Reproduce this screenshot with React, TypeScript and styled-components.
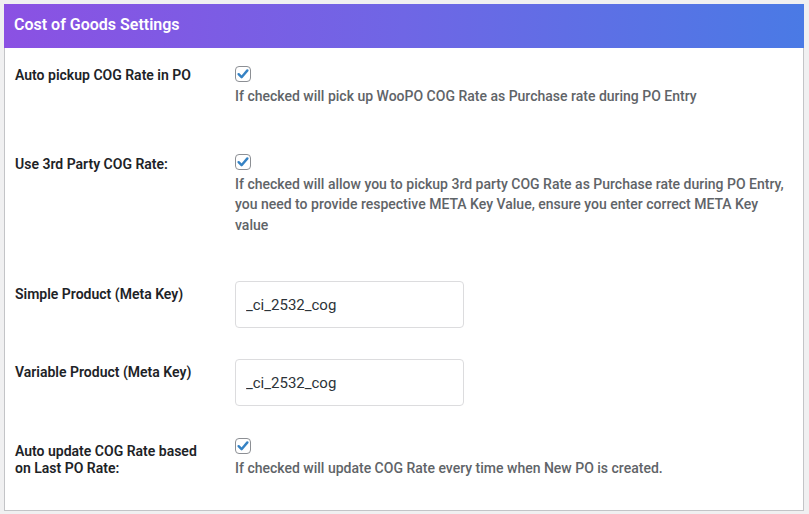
import styled, { createGlobalStyle } from "styled-components";

const GlobalStyle = createGlobalStyle`
  html, body {
    margin: 0;
    padding: 0;
    background: #f0f0f1;
  }
  body {
    font-family: Roboto, "Liberation Sans", Arial, sans-serif;
  }
`;

const Page = styled.div`
  padding: 4px 5px 0 4px;
`;

const Panel = styled.section`
  width: 800px;
  box-sizing: border-box;
  background: #ffffff;
  border: 1px solid #c3c4c7;
  border-top: none;
`;

const PanelHeader = styled.header`
  height: 44px;
  box-sizing: border-box;
  margin: 0 -1px;
  padding: 0 10px 3px;
  display: flex;
  align-items: center;
  background: linear-gradient(90deg, #8b51e3 0%, #6f66e5 50%, #4a7ae5 100%);
  color: #ffffff;
  font-size: 16px;
  font-weight: 600;
`;

const PanelBody = styled.div`
  padding: 2px 9px 0 10px;
`;

const Row = styled.div`
  display: grid;
  grid-template-columns: 220px 1fr;
  align-items: start;
  padding: 15px 0 16px;
`;

const Label = styled.div<{ $offset?: number }>`
  padding-top: ${(p) => p.$offset ?? 3}px;
  width: 200px;
  font-size: 14px;
  line-height: 17px;
  font-weight: 600;
  color: #1d2327;
`;

const Control = styled.div`
  display: flex;
  flex-direction: column;
  align-items: flex-start;
`;

const CheckBox = styled.span`
  width: 16px;
  height: 16px;
  margin-top: 1px;
  box-sizing: border-box;
  border: 1px solid #8c8f94;
  border-radius: 4px;
  background: #ffffff;
  display: flex;
  align-items: center;
  justify-content: center;
`;

const Description = styled.p`
  margin: 4px 0 15px;
  font-size: 14px;
  line-height: 20.5px;
  font-weight: 500;
  color: #5f6468;
`;

const TextInput = styled.input`
  width: 229px;
  height: 47px;
  box-sizing: border-box;
  margin: 0;
  padding: 0 10px;
  border: 1px solid #dcdcde;
  border-radius: 4px;
  background: #ffffff;
  font-family: Roboto, "Liberation Sans", Arial, sans-serif;
  font-size: 15px;
  color: #2c3338;
  outline: none;
`;

function Check() {
  return (
    <CheckBox>
      <svg width="14" height="14" viewBox="0 0 14 14">
        <path d="M2.6 7.2 L5.6 10.2 L11.4 3.4" fill="none" stroke="#3582c4" strokeWidth="2.4" strokeLinecap="round" strokeLinejoin="round" />
      </svg>
    </CheckBox>
  );
}

type Setting =
  | { kind: "check"; label: string; help: string; offset?: number }
  | { kind: "text"; label: string; value: string };

const settings: Setting[] = [
  {
    kind: "check",
    label: "Auto pickup COG Rate in PO",
    help: "If checked will pick up WooPO COG Rate as Purchase rate during PO Entry",
    offset: 2,
  },
  {
    kind: "check",
    label: "Use 3rd Party COG Rate:",
    help: "If checked will allow you to pickup 3rd party COG Rate as Purchase rate during PO Entry, you need to provide respective META Key Value, ensure you enter correct META Key value",
  },
  { kind: "text", label: "Simple Product (Meta Key)", value: "_ci_2532_cog" },
  { kind: "text", label: "Variable Product (Meta Key)", value: "_ci_2532_cog" },
  {
    kind: "check",
    label: "Auto update COG Rate based on Last PO Rate:",
    help: "If checked will update COG Rate every time when New PO is created.",
    offset: 6,
  },
];

export default function App() {
  return (
    <>
      <GlobalStyle />
      <Page>
        <Panel>
          <PanelHeader>Cost of Goods Settings</PanelHeader>
          <PanelBody>
            {settings.map((s) => (
              <Row key={s.label}>
                {s.kind === "check" ? (
                  <>
                    <Label $offset={s.offset}>{s.label}</Label>
                    <Control>
                      <Check />
                      <Description>{s.help}</Description>
                    </Control>
                  </>
                ) : (
                  <>
                    <Label $offset={5}>{s.label}</Label>
                    <Control>
                      <TextInput defaultValue={s.value} readOnly />
                    </Control>
                  </>
                )}
              </Row>
            ))}
          </PanelBody>
        </Panel>
      </Page>
    </>
  );
}
